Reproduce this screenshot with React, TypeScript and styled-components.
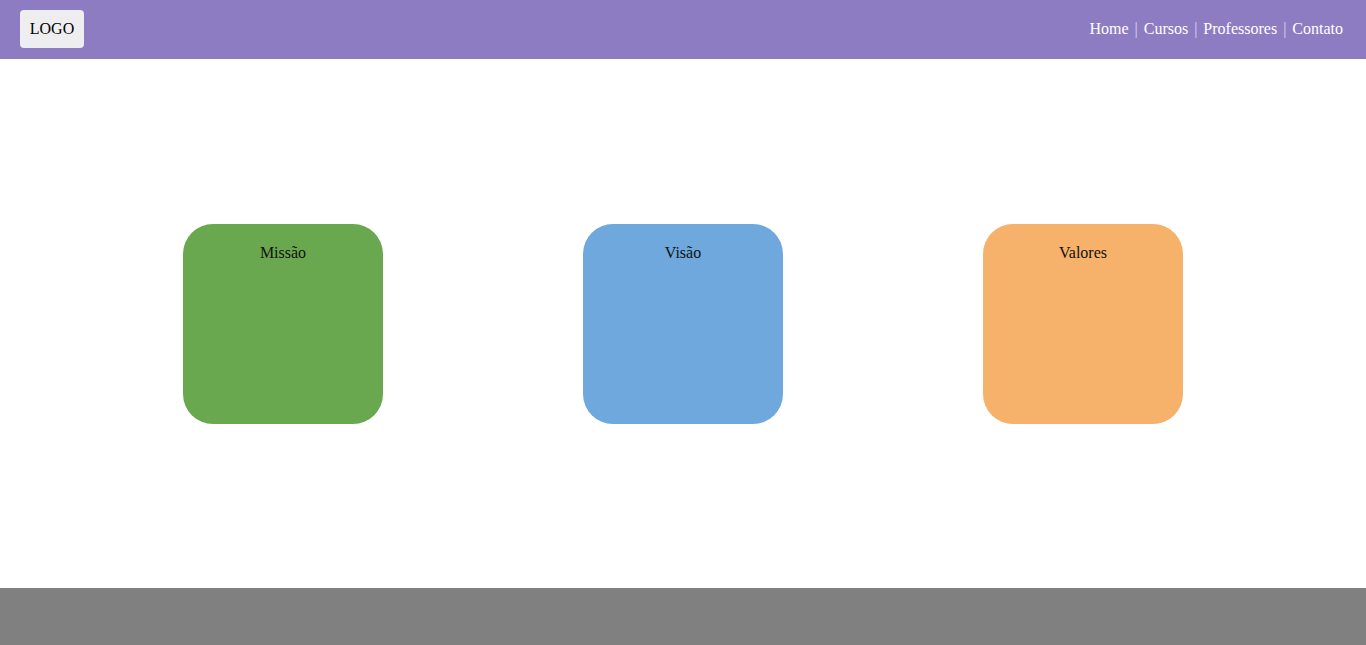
import { Fragment } from "react";
import styled, { createGlobalStyle } from "styled-components";

const GlobalStyle = createGlobalStyle`
  html, body {
    margin: 0;
    padding: 0;
  }
  body {
    font-family: "Liberation Serif", "Times New Roman", serif;
    font-size: 16px;
    background: #fff;
  }
`;

const Page = styled.div`
  display: flex;
  flex-direction: column;
  height: 645px;
`;

const Header = styled.header`
  display: flex;
  justify-content: space-between;
  align-items: center;
  height: 59px;
  padding: 0 23px 0 20px;
  background-color: #8e7cc3;
  box-sizing: border-box;
`;

const Logo = styled.div`
  display: flex;
  align-items: center;
  justify-content: center;
  width: 64px;
  height: 38px;
  margin-top: -1px;
  border-radius: 4px;
  background-color: #eeeef0;
  color: #000;
  font-size: 16px;
`;

const Nav = styled.nav`
  display: flex;
  align-items: center;
  gap: 6px;
  margin-top: -1px;
  font-size: 16px;
`;

const NavLink = styled.a`
  color: #fff;
  text-decoration: none;
`;

const Separator = styled.span`
  color: #dcd5f2;
`;

const Main = styled.main`
  flex: 1;
  display: flex;
  justify-content: center;
  align-items: center;
  gap: 200px;
`;

const Card = styled.div<{ $bg: string }>`
  width: 200px;
  height: 200px;
  box-sizing: border-box;
  padding-top: 20px;
  border-radius: 30px;
  background-color: ${(p) => p.$bg};
  text-align: center;
  color: #111;
  font-size: 16px;
`;

const Footer = styled.footer`
  height: 57px;
  background-color: #808080;
`;

const links = ["Home", "Cursos", "Professores", "Contato"];

const cards = [
  { title: "Missão", color: "#6aa84f" },
  { title: "Visão", color: "#6fa8dc" },
  { title: "Valores", color: "#f6b26b" },
];

export default function App() {
  return (
    <>
      <GlobalStyle />
      <Page>
        <Header>
          <Logo>LOGO</Logo>
          <Nav>
            {links.map((l, i) => (
              <Fragment key={l}>
                {i > 0 && <Separator>|</Separator>}
                <NavLink href="#">{l}</NavLink>
              </Fragment>
            ))}
          </Nav>
        </Header>
        <Main>
          {cards.map((c) => (
            <Card key={c.title} $bg={c.color}>
              {c.title}
            </Card>
          ))}
        </Main>
        <Footer />
      </Page>
    </>
  );
}
